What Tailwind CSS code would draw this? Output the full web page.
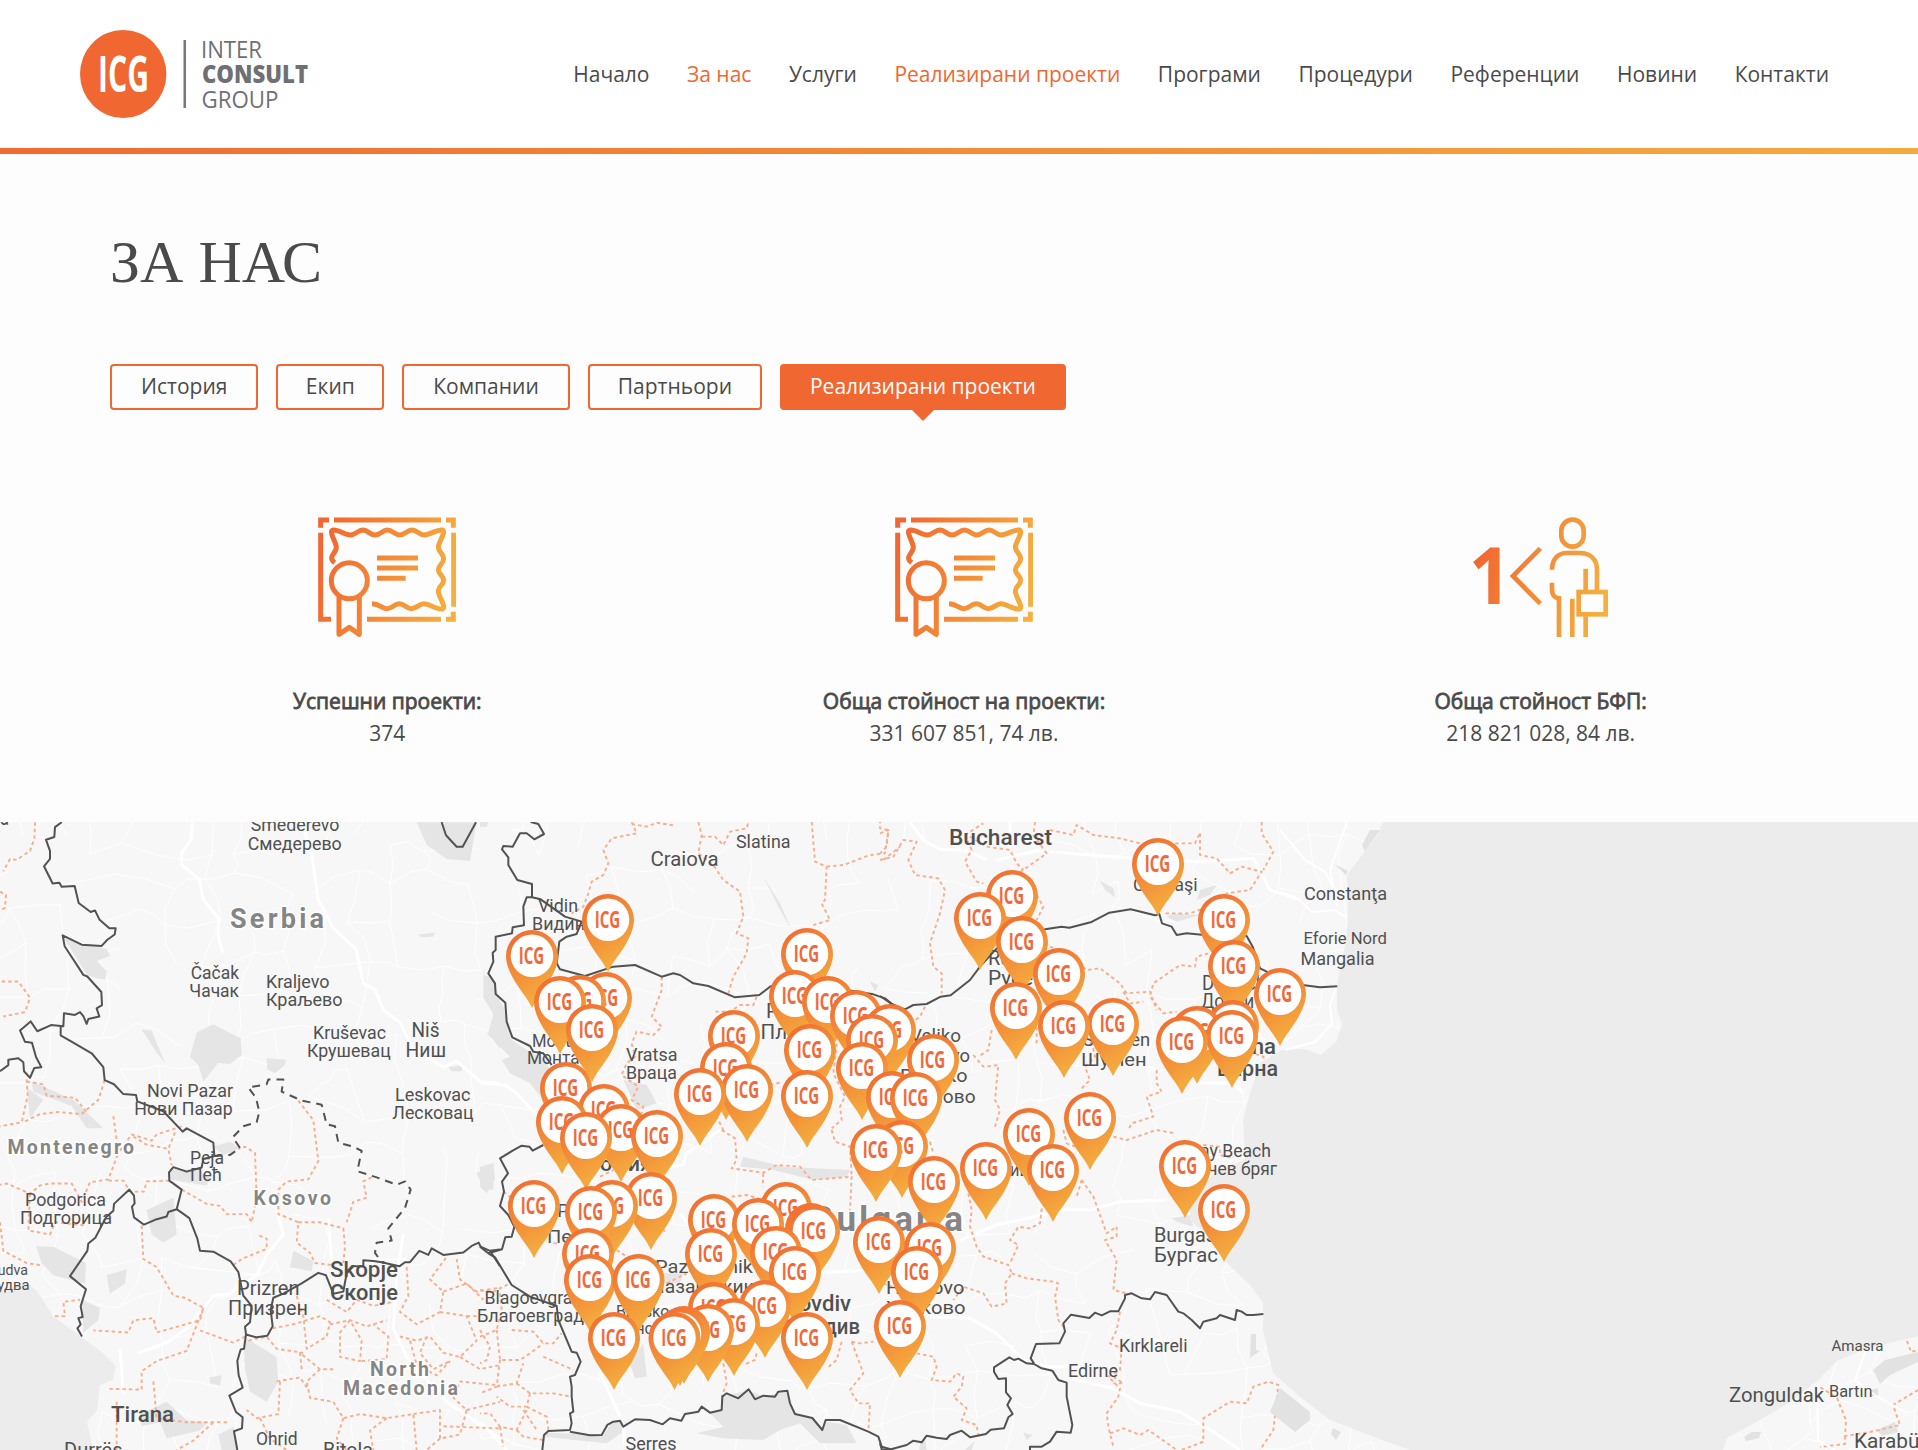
<!DOCTYPE html>
<html lang="bg">
<head>
<meta charset="utf-8">
<title>Inter Consult Group – Реализирани проекти</title>
<script src="https://cdn.jsdelivr.net/npm/@tailwindcss/browser@4"></script>
</head>
<body class="w-[1918px] h-[1450px] overflow-hidden bg-[#fdfdfd] font-['Open_Sans',sans-serif] text-[#4a4a4a]">
<header class="flex h-[148px] items-center justify-between bg-white pl-[80px] pr-[89px]">
  <svg class="block h-[100px] w-[232px]" viewBox="80 24 232 100">
    <ellipse cx="123.2" cy="74" rx="43.2" ry="44" fill="#f06731"/>
    <text x="98" y="91.500" font-size="50" font-weight="700" fill="#fff" textLength="51" lengthAdjust="spacingAndGlyphs">ICG</text>
    <rect x="183.500" y="40" width="2.500" height="68" fill="#77787c"/>
    <g fill="#6f7074" font-size="24.500">
      <text x="201" y="57.500" textLength="61" lengthAdjust="spacingAndGlyphs">INTER</text>
      <text x="202" y="82.500" font-weight="800" textLength="106" lengthAdjust="spacingAndGlyphs">CONSULT</text>
      <text x="201.500" y="108" textLength="77" lengthAdjust="spacingAndGlyphs">GROUP</text>
    </g>
  </svg>
  <nav class="flex gap-[37.5px] text-[21px] leading-[30px] whitespace-nowrap">
    <a>Начало</a><a class="text-[#f06731]">За нас</a><a>Услуги</a><a class="text-[#f06731]">Реализирани проекти</a><a>Програми</a><a>Процедури</a><a>Референции</a><a>Новини</a><a>Контакти</a>
  </nav>
</header>
<div class="h-[6px] bg-linear-to-r from-[#f16a31] to-[#f4aa3e]"></div>
<main>
  <section class="h-[668px] pl-[110px] pt-[74px]">
    <h1 class="font-['Liberation_Serif',serif] text-[60px] leading-[68px]">ЗА НАС</h1>
    <div class="mt-[68px] flex gap-[18px] text-[21px] leading-[40px] whitespace-nowrap">
      <a class="rounded-[4px] border-2 border-[#f06731] px-[29px] pb-[2px]">История</a>
      <a class="rounded-[4px] border-2 border-[#f06731] px-[27.5px] pb-[2px]">Екип</a>
      <a class="rounded-[4px] border-2 border-[#f06731] px-[29px] pb-[2px]">Компании</a>
      <a class="rounded-[4px] border-2 border-[#f06731] px-[28px] pb-[2px]">Партньори</a>
      <a class="relative rounded-[4px] border-2 border-[#f06731] bg-[#f06731] px-[28px] pb-[2px] text-white">Реализирани проекти
        <svg class="absolute top-[43px] left-1/2 -ml-[12px] h-[12px] w-[24px]" viewBox="0 0 24 12"><path d="M0 0H24L12 12Z" fill="#f06731"/></svg>
      </a>
    </div>
    <div class="-ml-[11px] mt-[107px] grid w-[1730px] grid-cols-3 text-center text-[21px] leading-[32px]">
      <div class="flex flex-col items-center">
        <svg class="h-[121px] w-[138px]" viewBox="144 82 414 363" fill="none" stroke="url(#cg)" stroke-width="15">
          <defs><linearGradient id="cg" gradientUnits="userSpaceOnUse" x1="144" y1="200" x2="558" y2="300"><stop stop-color="#f16631"/><stop offset="1" stop-color="#f4b13f"/></linearGradient></defs>
          <g id="cert"><path d="M152 114V91H177M192 91H513M528 91H550V114M551 129V351M550 366V389H528M513 389H291M183 389H152V129"/>
          <path d="M194 219C170 200 200 192 199 172C197 155 174 122 190 121C208 120 225 137 242 136C257 135 264 121 279 121C295 122 300 136 315 136C331 136 337 121 352 121C368 121 374 136 389 136C405 136 411 121 426 121C441 121 448 136 462 136C480 136 500 119 516 121C531 125 506 156 505 172C505 188 521 191 521 207C521 223 505 226 505 240C505 254 521 258 521 272C521 288 505 289 505 304C505 322 531 352 517 358C500 360 477 342 462 342C447 342 440 357 424 357C409 357 404 342 388 342C372 342 366 358 350 357C335 356 329 342 306 342"/>
          <circle cx="238" cy="273" r="54"/><path stroke-linejoin="round" d="M207 319V434L238 413L268 434V319M321 205H444M321 235H444M321 266H407"/></g>
        </svg>
        <p class="mt-[47px] [-webkit-text-stroke:0.8px_#4a4a4a]">Успешни проекти:</p><p>374</p>
      </div>
      <div class="flex flex-col items-center">
        <svg class="h-[121px] w-[138px]" viewBox="144 82 414 363" fill="none" stroke="url(#cg)" stroke-width="15"><use href="#cert"/></svg>
        <p class="mt-[47px] [-webkit-text-stroke:0.8px_#4a4a4a]">Обща стойност на проекти:</p><p>331 607 851, 74 лв.</p>
      </div>
      <div class="flex flex-col items-center">
        <svg class="h-[121px] w-[134px] overflow-visible" viewBox="222 82 402 363" fill="none" stroke="url(#pg)" stroke-width="14">
          <defs><linearGradient id="pg" gradientUnits="userSpaceOnUse" x1="222" y1="200" x2="624" y2="300"><stop stop-color="#f16631"/><stop offset="1" stop-color="#f4b13f"/></linearGradient></defs>
          <text x="206" y="342" font-size="234" font-weight="700" fill="url(#pg)" stroke="none" textLength="128" lengthAdjust="spacingAndGlyphs">1</text>
          <path d="M421 176L339 259L421 342"/>
          <rect x="484" y="90" width="67" height="81" rx="33"/>
          <path d="M456 240C456 205 478 190 500 190H540C570 190 591 208 591 240V303M557 237V303M456 279V298C456 320 466 326 483 327M477 320V442M517 327V442M557 380V442"/><rect x="536" y="307" width="81" height="67"/>
        </svg>
        <p class="mt-[47px] [-webkit-text-stroke:0.8px_#4a4a4a]">Обща стойност БФП:</p><p>218 821 028, 84 лв.</p>
      </div>
    </div>
  </section>
  <svg class="block h-[628px] w-[1918px] bg-[#f7f7f7]" viewBox="0 822 1918 628" font-family="Roboto, sans-serif">
    <defs><linearGradient id="pin" gradientUnits="userSpaceOnUse" x1="-20" y1="0" x2="18" y2="58"><stop stop-color="#f16a31"/><stop offset="1" stop-color="#f4a93e"/></linearGradient></defs>
    <!-- minor roads -->
    <g id="roads" fill="none" stroke="#fff" stroke-width="1"></g>
    <!-- parks and highlands -->
    <g fill="#e5e5e5">
      <g transform="translate(0 810) scale(.33333 .40816)"><path d="M188 310L245 330L320 340L330 358L290 370L320 395L316 415L290 412L262 405ZM590 545L640 525L722 560L725 600L690 622L655 620L610 665L595 625L570 605ZM800 608L858 612L855 625L825 645L802 635ZM425 538L455 540L495 620L470 595ZM1250 30H1430L1410 125L1340 120L1280 85ZM1450 405L1475 410L1500 465V585L1465 545L1480 500L1450 460ZM95 665L220 710L310 780L260 780L215 725L100 690ZM80 680L130 710L90 755ZM640 825L690 812L720 830L670 845ZM510 880L590 880L630 900L620 920L510 905ZM440 980L520 950L530 1040L490 1060L455 1040ZM108 1068L160 1070L258 1110L255 1160L160 1140L125 1110ZM245 1200L300 1220L295 1250L250 1280ZM320 1140L380 1125L375 1160L330 1185ZM880 1080L940 1105L935 1130L870 1120ZM730 1290L830 1340L835 1400L800 1450L750 1425L735 1370ZM420 1480L500 1450L560 1495L625 1500L600 1520L500 1540L480 1500L425 1510ZM630 1390L665 1385L660 1410L630 1405ZM655 1530L700 1512L712 1568H665ZM1430 890L1480 865L1480 930L1450 930ZM1255 305L1305 300L1300 310L1265 312ZM1345 630L1390 625L1385 640L1355 640Z"/></g>
      <g transform="translate(480 810) scale(.33333)"><path d="M10 490L50 560L70 590L95 690L155 730L200 750L215 800L190 870L150 820L90 790L65 750L90 740L20 670L60 660L15 530ZM430 810L500 825L530 880L470 900ZM850 200L900 280L935 360L900 300ZM0 36H25L20 50H0ZM1170 515L1195 525L1185 545Z"/></g>
      <g transform="translate(480 1130) scale(.33333)"><path d="M0 110L40 100L45 150L20 190L0 170ZM790 80L910 110L1110 120L1100 140L1000 150L880 120L780 110ZM450 700L490 640L500 740L465 745ZM190 920L380 940L430 905L440 875L400 872L370 915L200 908ZM690 850L725 840L730 800L806 780L850 800L920 785L945 852L1000 865L1027 900L1040 875L1100 885L1130 940L1020 940L960 880L900 900L850 930L730 925L650 910L730 890ZM540 430L610 430L600 460L550 460Z"/></g>
      <g transform="translate(880 810) scale(.33333)"><path d="M660 212L700 235L705 262L675 240ZM960 240L1010 225L990 255L950 270ZM880 310L960 315L890 335L860 320Z"/></g>
      <g transform="translate(880 1130) scale(.33333)"><path d="M875 265L930 255L940 290L890 275ZM430 908L458 915L440 930ZM120 940L135 925L140 960H118ZM265 950L285 932L275 960H255Z"/></g>
    </g>
    <!-- motorways -->
    <g fill="none" stroke="#fff" stroke-width="3" stroke-linejoin="round">
      <g transform="translate(0 810) scale(.33333 .40816)"><path vector-effect="non-scaling-stroke" d="M578 30L572 75L545 105L545 135L598 170L610 220L655 265L655 310L668 350M905 30L935 110L955 220L1000 290L1068 340L1090 425L1125 440L1150 490L1200 520L1235 580L1330 630L1370 615L1440 665L1500 670M830 980L850 1040L800 1090L770 1140L690 1185L640 1190L560 1270L500 1305L415 1330M985 1000L995 1110M1210 1040L1190 1140L1180 1270L1220 1340L1340 1450L1500 1540M360 1320L370 1430"/></g>
      <g transform="translate(480 810) scale(.33333)"><path vector-effect="non-scaling-stroke" d="M0 820L75 825L110 850L170 915"/></g>
      <g transform="translate(480 1130) scale(.33333)"><path vector-effect="non-scaling-stroke" d="M500 120L610 105L620 70L720 0M600 250L700 380L1000 430L1170 420M360 730L430 880L435 950M0 875L80 960"/></g>
      <g transform="translate(880 810) scale(.33333)"><path vector-effect="non-scaling-stroke" d="M90 36L130 90L180 118L260 122L320 150M390 36V110M350 150L470 122L700 140L960 155L1120 145L1170 240L1262 270M780 760L830 780M940 818L1060 820L1085 845"/></g>
      <g transform="translate(880 1130) scale(.33333)"><path vector-effect="non-scaling-stroke" d="M230 335L350 285L560 238L630 240L720 215L860 210M150 560L270 565L350 610L430 690L500 710L560 710M570 745L700 775L780 820L900 845L1000 905L1080 960"/></g>
    </g>
    <!-- regional boundaries -->
    <g fill="none" stroke="#f7ae8e" stroke-width="1.9" stroke-dasharray="3.500 3" stroke-linejoin="round">
      <g transform="translate(0 810) scale(.33333 .40816)">
        <path vector-effect="non-scaling-stroke" d="M105 30L103 70L90 100L50 122L30 120L10 150M0 200L18 208L15 240L0 245M5 420L55 420L90 460L75 495L10 506M80 660L83 700L65 765L0 775M314 662L295 710L245 745L175 740L120 745L70 765M80 665L130 672L140 700L225 705L260 740M340 750L355 840L325 905L270 912L245 960L215 915L150 915L120 920L90 940L20 915L0 918M545 775L470 795L455 810L395 795L355 840M525 790L505 830L515 870M400 800L440 820L505 830M508 908L440 910L432 935L390 935L370 908L325 908M90 940L85 1030L150 1040L165 1010L260 1018M545 930L620 965L660 970L680 990L740 990L755 1010L770 950L765 840L735 825L715 830M895 712L940 760L955 860L925 905L860 910L835 930L835 990L895 1010L890 1060L930 1085L945 1110L1000 1115M895 1010L960 1010L1030 1025L1035 1070L1030 1110M1115 900L1090 910L1100 950L1060 960L1040 1010M425 1018L430 1100L470 1120L520 1190L555 1195L610 1220L600 1250L470 1280L460 1245L400 1250L385 1280L280 1275M610 1220L560 1325L470 1350L425 1375L425 1420L320 1418M600 1275L700 1305L735 1290M700 1115L725 1100L800 1075L800 1050L770 1040M165 1240L195 1240L190 1205L240 1200M0 1010L10 1080L80 1110L120 1115M350 1450L350 1568M460 1400L470 1490L560 1500L690 1500M640 1500L580 1545L530 1568"/>
        <path vector-effect="non-scaling-stroke" d="M745 1300L800 1290L830 1320L910 1330M818 1270L880 1260L960 1240L990 1255L980 1290L920 1320L910 1240L900 1220L890 1190M980 1200L1040 1230L1070 1200L1120 1215L1180 1205M990 1260L1050 1250L1100 1265L1160 1250M1050 1250L1020 1280L1020 1340L1080 1350L1085 1300L1050 1250M1085 1350L1160 1345L1165 1290L1120 1260M1220 1120L1225 1190L1200 1230L1250 1260L1320 1230L1330 1180L1290 1150L1340 1095M1320 1230L1400 1240L1430 1300L1380 1340L1330 1330L1290 1290L1250 1300L1200 1290M1330 1180L1400 1160L1450 1200M1400 1240L1440 1240M1230 1300L1250 1360L1310 1385L1350 1350M1380 1340L1440 1370L1500 1360M960 1370L920 1400L930 1440L1000 1450L1030 1490L1080 1480L1160 1490L1240 1480L1250 1568M830 1400L900 1390L925 1420M840 1400L835 1480L770 1490L740 1470M780 1490L810 1540L860 1568M1030 1490L1010 1540L1040 1568M1160 1490L1110 1520L1120 1568M1240 1480L1320 1470L1320 1540L1380 1530L1400 1470L1360 1440L1380 1400L1500 1410M1400 1470L1500 1450M1320 1540L1280 1568M1330 1510L1500 1515M905 1370L900 1330L960 1370L1000 1370M1280 1290L1260 1330L1300 1370L1350 1350M1370 1100L1380 1150L1430 1180L1500 1170"/>
      </g>
      <g transform="translate(480 810) scale(.33333)"><path vector-effect="non-scaling-stroke" d="M455 36L470 70L395 85L370 120L385 160L370 195L335 215L325 250L310 290L275 310M455 42L500 50L530 38L580 46M655 36L665 75L655 130L700 165L730 210L780 245L790 320L770 370L805 385L800 430L760 500L745 550M665 80L705 80L730 105L750 65L800 55L805 36M995 36L1005 155L1040 170L1035 270L1025 280L1050 330L1000 345M1040 170L1090 165L1170 135L1215 130L1225 60L1200 55V36M1210 150L1260 110M545 500L545 540L515 620L545 650L520 675L470 665L455 700L465 740L440 760L425 795L475 830L455 870L490 890L480 925M830 560L820 585L780 585L750 605L705 605M870 825L900 818M1070 700L1060 790L1095 860L1080 890L1085 930L1055 955M700 900L730 960"/></g>
      <g transform="translate(480 1130) scale(.33333)"><path vector-effect="non-scaling-stroke" d="M725 0L765 25L770 90L755 115L850 128L890 105L960 110L995 150L1115 140L1110 245M850 130L848 170M1055 0L1065 35L1110 50L1115 140M755 200L800 195L850 210M1115 635L1140 640L1180 635M1085 635L1070 690L1040 715M1115 635L1150 730L1110 780L1135 820L1170 820L1165 905M830 670L825 690L790 705M730 700L740 760L725 800M70 185L90 200L85 230M220 340L240 340M520 270L560 310M360 140L400 120M410 360L440 380M560 460L620 430M0 480L40 485L90 460M60 490L65 540L50 600L0 620M95 600L160 605L190 640L220 640L245 610M50 600L60 690L120 690L150 670L190 640M190 680L280 720M60 690L50 770L0 790M50 770L110 760L130 700M110 760L150 790L220 790L275 800M150 790L140 830L90 830L50 800M140 830L200 860L205 900M140 840L110 900L60 890L30 850L0 850M110 900L130 920L190 930M60 890L70 950M0 600L30 650L20 690L0 700M130 840L170 900"/></g>
      <g transform="translate(880 810) scale(.33333)"><path vector-effect="non-scaling-stroke" d="M0 150L40 140L70 90L110 95L85 150L105 195L175 205L195 240L180 310L150 400L160 470L185 490L185 550M0 70L25 60L20 110L0 130M255 75L310 40M255 75L275 120L255 155L290 215L310 220M270 80L320 110L390 120L410 160L430 180M465 36L460 75L500 130L430 180L400 200M510 60L580 75L590 45L640 75L720 85L780 100L945 100L960 68L960 135L1010 145L1050 190L1085 170L1145 185L1110 240L1040 250L1010 280L930 310L850 310M1145 36V70L1180 125L1150 180M470 255L490 290L470 330M510 410L560 430L620 480L660 475L720 520L740 550L810 545L830 600M985 430L950 440L945 470L900 465L820 520L810 560L850 610L890 605M730 545L750 580L790 575M280 735L310 770L355 765L345 870L360 900L345 950M335 660L325 720L295 740M620 680L640 715L645 740L615 770L630 810L600 840M830 780L830 820L845 845L800 860L820 920L755 940L745 960M470 700L470 640M1090 720L1150 740L1160 770M135 590L120 620L80 650"/></g>
      <g transform="translate(880 1130) scale(.33333)"><path vector-effect="non-scaling-stroke" d="M150 35L160 70M550 0L560 40L600 55M700 20L740 30L830 0L885 10M605 150L640 200L680 310L710 290L710 320L675 330L710 390L700 480L740 490M605 150L590 200M265 190L275 240L270 290L290 350L310 380L385 405L395 430L375 460L380 520L335 530L310 490L250 470L220 510M485 235L480 280L450 295L415 290L390 330L415 345L390 400M395 430L440 445L520 455L535 460L525 500L535 570L550 590M720 545L710 600L690 640L725 655L720 720L685 740L720 775L715 800L680 850L685 890L700 950M690 910L730 895L780 915L805 900L890 960M700 740L730 760L700 760M905 960L970 935L970 865L1050 815L1100 820L1120 770L1165 755L1195 765L1180 900L1140 960M110 670L160 680L170 710L155 750L210 755L230 730L250 740L245 770L220 800L260 835L245 870L290 885L295 915M10 460L60 480M970 45L1020 50L1020 75L1060 85"/></g>
    </g>
    <!-- sea -->
    <path fill="#ececec" d="M1383 822L1378 834L1365 851L1347 875L1348 916L1346 941L1337 985L1337 1010L1342 1024L1336 1042L1321 1055L1304 1049L1282 1050L1260 1063L1250 1093L1243 1120L1245 1160L1217 1170L1190 1200L1190 1220L1213 1240L1227 1263L1250 1285L1263 1303L1263 1330L1273 1373L1300 1397L1330 1420L1382 1440L1410 1450H1723L1727 1438L1760 1420L1790 1402L1817 1381L1837 1361L1866 1349L1918 1336V822ZM0 1291L27 1283L37 1291L53 1316L80 1336L103 1353L116 1366L113 1380L100 1385L97 1410L87 1422L93 1450H0Z"/>
    <path fill="#e2e2e2" d="M1280 1388L1310 1412L1310 1420L1295 1432L1270 1412ZM1370 830L1380 830L1365 851L1362 845ZM1251 1334L1256 1334V1350L1260 1351L1250 1358ZM1333 1428L1341 1432L1336 1440L1331 1434ZM1744 1437L1752 1432L1761 1432L1759 1438L1746 1441ZM1873 1370L1885 1360L1918 1352V1362L1890 1375L1880 1384ZM1877 1430L1895 1422L1898 1432L1882 1436ZM1871 1390L1878 1388V1396L1870 1396ZM1334 864L1348 871L1346 875Z"/>
    <g fill="none" stroke="#f7ae8e" stroke-width="1.9" stroke-dasharray="3.500 3"><path d="M1918 1390L1893 1405L1900 1425L1870 1432L1845 1436L1846 1420L1837 1398L1820 1387M1845 1436V1444L1820 1447M1907 1341L1911 1352L1918 1350"/></g>
    <g fill="none" stroke="#fff" stroke-width="2"><path d="M1280 892L1297 898L1312 912L1335 910L1347 918M1347 822L1330 870L1337 905M1280 830L1305 860L1325 872L1335 890M1337 985L1330 1005L1332 1024L1315 1042L1285 1050M1866 1350L1855 1380L1875 1395L1907 1413M1817 1385L1818 1440L1835 1450"/></g>
    <!-- country borders -->
    <g fill="none" stroke="#525252" stroke-width="2" stroke-linejoin="round">
      <g transform="translate(0 810) scale(.33333 .40816)">
        <path vector-effect="non-scaling-stroke" d="M185 30L165 42L163 66L138 73L150 100V120L132 138L158 180L178 178L185 188L224 186L236 228L272 250L285 246L298 268L328 290L347 290L344 305L322 318L305 333L245 330L188 307L194 334L250 404L262 408L304 446L306 478L290 486L298 506L265 512L260 524L250 505L240 495L225 502L192 498L190 530L153 527L112 542L92 518L60 540L75 568L96 570L108 605L124 630L103 632L90 656L72 640L70 618L55 608L25 612V625L0 640M182 530V552L230 575L275 596L310 630L314 662L342 672L370 696L408 698L412 714L490 738L548 788L560 780L640 815L643 848L610 855L605 876L560 886L520 875L507 888L508 908L545 930L530 978L505 985L500 996L465 1004L432 1016L402 998L396 972L404 964L402 945L388 930L342 965L340 982L318 998L286 1048L265 1062L262 1080L210 1142L258 1174L242 1216L248 1242L235 1245L242 1260L232 1270L246 1290"/>
        <path vector-effect="non-scaling-stroke" d="M530 978L568 1000L592 1050L600 1080L640 1082L692 1106L715 1132L730 1190L755 1215L750 1255L735 1266L738 1285L770 1292L802 1288L818 1265L812 1225L820 1195L850 1185L905 1160L955 1134L978 1140L1000 1185L1030 1180L1040 1135L1060 1118L1090 1118V1103L1120 1105L1145 1108L1198 1118L1215 1108L1230 1108L1258 1080L1285 1090L1295 1074L1330 1090L1390 1084L1415 1068L1436 1060L1442 1070L1470 1080L1500 1118M1470 1080L1500 1077M738 1285L732 1320L722 1322L712 1350L716 1385L728 1415L688 1435L708 1475L728 1488L726 1515L702 1522L712 1568M1325 30L1338 62L1370 90H1388L1428 30"/>
        <path vector-effect="non-scaling-stroke" stroke-dasharray="8 6" d="M643 848L690 845L720 828L698 802L730 775L770 765L778 740L768 705L745 680L800 672L805 660L850 660L845 690L905 712L965 722L980 770L1005 775L1015 815L1060 825L1085 835L1072 885L1130 900L1190 918L1215 910L1232 930L1215 975L1180 1010L1165 1025L1175 1055L1130 1060L1125 1085L1145 1108"/>
      </g>
      <g transform="translate(480 810) scale(.33333)"><path vector-effect="non-scaling-stroke" d="M152 36L175 42L192 72L163 88L140 70H120L98 110L70 108L66 118L85 142V165L112 210L156 222V262L140 262L130 290L132 346L98 352L96 370L47 380V420L38 428L40 455L25 490L45 520L47 552L76 578L80 635L97 682L150 708L160 725L190 730L215 765M156 262L182 268L255 320L305 335L290 372L260 380L238 395L230 460L240 478L315 498L400 470L465 465L545 500L580 490L600 495L640 520L685 528L765 562L838 555L870 530L990 480L1100 540L1180 553L1215 565L1240 585"/></g>
      <g transform="translate(480 1130) scale(.33333)"><path vector-effect="non-scaling-stroke" d="M190 45L158 62L148 50L125 47L98 62L60 85L84 130L66 155L72 185L60 228L85 255L103 290L95 320L76 322L66 358L25 370L0 350M25 370L45 382L95 465L150 500L230 528L235 570L275 665L290 668L302 695L285 735L270 740L275 770V800L280 845L270 850L275 880L270 900L205 903L192 915L187 960M270 905L330 916L365 915L382 885L400 875L420 872L430 890L465 868L510 870L548 883L570 865L604 872L615 852L655 845L665 830L690 848L725 840L727 800L740 790L775 805L806 778L825 808L850 797L885 800L895 785L922 782L930 820L945 852L997 864L1027 900L1037 870L1080 870L1165 905L1195 920L1205 950L1240 960"/></g>
      <g transform="translate(880 810) scale(.33333)"><path vector-effect="non-scaling-stroke" d="M0 558L35 582L75 598L100 585L140 582L182 560L212 556L270 510L300 470L350 415L430 380L495 358L545 350L568 353L632 337L688 308L752 298L825 316L838 312L846 340L875 350L890 375L920 370L965 374L1100 378L1118 410L1140 475L1165 487L1273 526L1320 532L1372 529"/></g>
      <g transform="translate(880 1130) scale(.33333)"><path vector-effect="non-scaling-stroke" d="M0 940L5 958L25 960L80 945L100 932L125 937L140 917L170 923L200 927L210 915L245 902L270 922L318 912L332 899L372 895L385 862L398 852L382 825L393 805L378 787V745L355 747L342 725V712L388 682L402 690L415 686L440 700L462 702L485 715L517 722L535 750L560 758V800L577 885L572 908L530 905L510 935L485 950H450V960M462 700L452 685L468 642L538 640L555 605L550 580L573 554L628 564L645 548L665 556L690 544H715L735 505V495L755 490L785 505L810 508L825 486L860 495L895 545L910 550L935 570L960 595L970 575L1010 565L1020 555L1065 570L1070 540L1085 545L1100 555L1120 555L1150 552"/></g>
    </g>
    <g id="labels"></g>
    <g id="pins"></g>
  </svg>
</main>
<script>
  // Place names: text, x, baseline, width, size, weight, colour
  const G = '#858585', labels = [
    ['а',0,825,9,20],['Smederevo',250.7,831,88.7,18],['Смедерево',247.7,850,94,18],['Serbia',230,927.5,94,27,700,G],
    ['Čačak',190.7,979.4,48.3,18],['Чачак',189.3,997,49.7,18],['Kraljevo',266,987.6,63.500,18],['Краљево',266,1006,76.5,18],
    ['Kruševac',313,1038.6,73,18],['Крушевац',307,1056.5,83.7,18],['Niš',411.5,1037,28,20.5],['Ниш',405.5,1057.3,40.5,20.5],
    ['Novi Pazar',147,1097,86,18],['Нови Пазар',134.3,1115,98.3,18],['Leskovac',395,1100.6,75.5,18],['Лесковац',392.3,1119,81.3,18],
    ['Montenegro',7.5,1153.7,126.5,19.5,700,G],['Peja',190,1164,34,18],['Пећ',190,1181.4,32,18],['Kosovo',253.5,1204.7,77.5,19.5,700,G],
    ['Podgorica',25,1205.5,81,18],['Подгорица',20,1223.5,92,18],['Budva',-11,1275,39,15.5],['Будва',-12,1290.4,41.5,15.5],
    ['Prizren',237,1294.5,62.5,20],['Призрен',228,1315,80,20],['Skopje',330,1277.3,68,22,500],['Скопје',330,1299.8,68,22,500],
    ['North',370,1376,59,19.5,700,G],['Macedonia',343,1395,115,19.5,700,G],['Tirana',111,1422,63,22.5,500],['Ohrid',256,1445,41.5,18],
    ['Durrës',64,1457,58.5,20],['Bitola',323,1457,50,20],['Craiova',650.5,865.7,68,20],['Slatina',736,847.7,54.5,17.5],
    ['Vidin',538,912,40,17.5],['Видин',532,930,53,17.5],['Montana',532,1046.7,66,18],['Монтана',527,1064.3,72,18],
    ['Vratsa',626,1061,51.5,17.5],['Враца',626,1079,51,17.5],['Pleven',766,1018,60,20],['Плевен',760.5,1039,72,20],
    ['София',586,1171,66,21,500],['Pernik',557,1217,56,19],['Перник',547,1242.7,70,19],['Blagoevgrad',484.5,1304.3,98,18],['Благоевград',477,1322,107,18],
    ['Pazardzhik',655,1273.3,98,19],['Пазарджик',651,1292.7,103,19],['Plovdiv',779,1311,72,21.5,500],['Пловдив',775,1334,85,21.5,500],
    ['Bansko',616,1316.7,53.5,16],['Банско',616,1333.5,55,16],['Serres',625.5,1450,51,17.5],['Bulgaria',811,1230.7,152,35,700,G],
    ['Bucharest',949,845,103,22,500],['Călăraşi',1133,890.7,64.5,18],['Ruse',988,965,44,20],['Русе',988,985,45,20],
    ['Dobrich',1202,990,64,20],['Добрич',1201,1007.7,63,20],['Varna',1218,1054.3,58,22,500],['Варна',1217,1076,61,22,500],
    ['Shumen',1083,1045.7,67,19],['Шумен',1081,1065.7,65.5,19],['Veliko',910,1041.7,51,18.5],['Tarnovo',904,1062,66,18.5],['Велико',900,1082,67.5,18.5],['Търново',898,1103,77.5,18.5],
    ['Sunny Beach',1170,1156.7,101,18],['Слънчев бряг',1166,1175,111,18],['Burgas',1154,1241.7,62,19.5],['Бургас',1154,1262.3,64,19.5],
    ['Сливен',990,1175.7,57,18],['Haskovo',886,1294,78.5,19],['Хасково',886,1314,79.5,19],['Kırklareli',1119,1351.7,68.5,17.5],['Edirne',1068,1376.7,50,17.5],
    ['Constanţa',1304,899.8,83,17.5],['Eforie Nord',1303.5,944,83.5,17],['Mangalia',1300.5,965,74,17.5],['Amasra',1831.5,1350.8,52,15.5],
    ['Zonguldak',1729,1401.8,95,20],['Bartın',1829,1396.5,43.5,16.5],['Karabük',1854,1448,76,20]
  ];
  document.getElementById('labels').innerHTML = labels.map(([t,x,y,w,s,b=400,c='#505050']) =>
    `<text x="${x}" y="${y}" font-size="${s}" font-weight="${b}" fill="${c}" textLength="${w}" lengthAdjust="${c===G?'spacing':'spacingAndGlyphs'}"${c===G?' stroke="#fff" stroke-width="3" paint-order="stroke"':''}>${t}</text>`).join('');

  // Project pins: centre x, top y; southern pins overlap northern ones
  const pins = [[608,894],[532,930],[560,976],[580,975],[606,972],[592,1004],[807,928],[795,970],[828,976],[856,990],[890,1004],[872,1014],[734,1010],[810,1024],[862,1042],[726,1042],[700,1068],[747,1064],[807,1070],[892,1071],[916,1072],[933,1034],[566,1062],[604,1084],[562,1096],[621,1104],[586,1112],[657,1110],[876,1124],[902,1120],[934,1156],[651,1172],[534,1180],[612,1180],[591,1186],[714,1194],[786,1182],[758,1198],[811,1203],[814,1205],[776,1226],[711,1228],[588,1228],[590,1254],[638.500,1254],[795,1246],[765,1280],[714,1282],[734,1298],[708,1304],[684,1306],[680,1308],[674.500,1312],[614,1312],[807,1312],[879,1216],[930,1222],[917,1246],[900,1300],[986,1142],[1053,1144],[1029,1108],[1090,1092],[1185,1140],[1224,1184],[1158,838],[1012,870],[980,892],[1022,916],[1059,948],[1016,982],[1064,1000],[1113,998],[1224,894],[1234,940],[1280,968],[1197,1006],[1182,1016],[1233,1000],[1232,1010]];
  document.getElementById('pins').innerHTML = pins.sort((a,b)=>a[1]-b[1]).map(([x,y]) =>
    `<g transform="translate(${x} ${y})"><path d="M0 78C-5 67-14 58-19 48C-23 41-26 33-26 26A26 26 0 0 1 26 26C26 33 23 41 19 48C14 58 5 67 0 78Z" fill="url(#pin)"/><circle cy="25.700" r="21.300" fill="#fff"/><text x="-13.300" y="34" font-size="24" font-weight="700" font-family="Open Sans" fill="#f0693a" textLength="25.500" lengthAdjust="spacingAndGlyphs">ICG</text></g>`).join('');

  // Minor road mesh: a jittered grid with some links left out
  let seed = 7; const rnd = () => (seed = seed * 16807 % 2147483647) / 2147483647;
  const P = [], S = 38; let d = '';
  for (let r = 0; r < 19; r++) { P.push([]); for (let c = 0; c < 54; c++) P[r].push([c*S - 20 + (rnd()-.5)*28, 805 + r*S + (rnd()-.5)*28]); }
  const link = (a,b) => { d += `M${a[0].toFixed(0)} ${a[1].toFixed(0)}L${((a[0]+b[0])/2+(rnd()-.5)*12).toFixed(0)} ${((a[1]+b[1])/2+(rnd()-.5)*12).toFixed(0)}L${b[0].toFixed(0)} ${b[1].toFixed(0)}`; };
  for (let r = 0; r < 18; r++) for (let c = 0; c < 53; c++) { if (rnd() < .6) link(P[r][c], P[r][c+1]); if (rnd() < .6) link(P[r][c], P[r+1][c]); }
  document.getElementById('roads').innerHTML = `<path d="${d}"/>`;
</script>
</body>
</html>
